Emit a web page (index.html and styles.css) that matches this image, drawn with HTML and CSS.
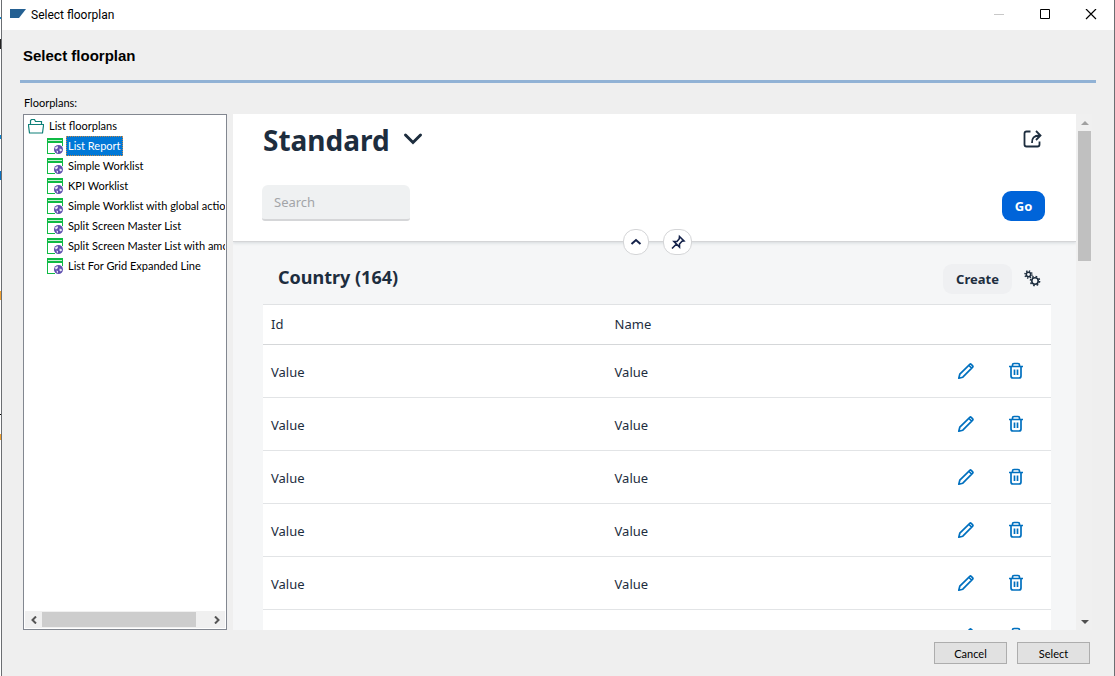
FILE: index.html
```
<!DOCTYPE html>
<html lang="en">
<head>
<meta charset="utf-8">
<title>Select floorplan</title>
<link rel="stylesheet" href="styles.css">
</head>
<body>
<svg class="sprite" aria-hidden="true">
  <symbol id="page" viewBox="0 0 16 16">
    <path fill="#fff" d="M0 0h16v16H0z"/>
    <path fill="#0fba45" d="M0 0h16v5H0z"/>
    <path fill="#0fba45" d="M0 4h1v12H0zM0 15h8v1H0zM15 4h1v4h-1z"/>
    <path fill="#c5efd2" d="M1 2h14v1H1z"/>
    <circle cx="11.500" cy="11.500" r="4.500" fill="#5f4fb0"/>
    <path fill="#e9e5f6" d="M8 9.500l2.500-1.500.5 1.500-1 1.500-1.500.5zM12.500 10.500l2 .5.5 1.500-1.500 1-1-1zM9.500 12.500l1.500.5v1.500l-1 .5z"/>
  </symbol>
  <symbol id="pencil" viewBox="0 0 18 18">
    <path d="M1.800 16.200l1-4L12.800 2.300q.7-.6 1.400 0l1.500 1.500q.6.700 0 1.400L5.800 15.200zM12 3.500l2.500 2.500" fill="none" stroke="currentColor" stroke-width="1.700" stroke-linejoin="round"/>
  </symbol>
  <symbol id="trash" viewBox="0 0 16 18">
    <path d="M1 4.500h14M4.500 4V3q0-1.500 1.500-1.500h4q1.500 0 1.500 1.500v1M3 4.500V14q0 2 2 2h6q2 0 2-2V4.500M6.500 7.500v5.500M9.500 7.500v5.500" fill="none" stroke="currentColor" stroke-width="1.700"/>
  </symbol>
</svg>
<main class="window">
  <header class="titlebar">
    <svg class="logo" width="16" height="9" viewBox="0 0 16 9" aria-hidden="true"><path fill="#246092" d="M0 0h16l-7 9H0z"/></svg>
    <span class="caption">Select floorplan</span>
    <button class="winbtn" type="button" aria-label="Minimize" disabled><svg width="12" height="12"><path d="M1 5.500h10" stroke="#c8c8c8"/></svg></button>
    <button class="winbtn" type="button" aria-label="Maximize"><svg width="12" height="12"><path d="M1.500 .5h9v9h-9z" fill="none" stroke="#000"/></svg></button>
    <button class="winbtn" type="button" aria-label="Close"><svg width="12" height="12"><path d="M1 0l10 10M11 0L1 10" stroke="#000" stroke-width="1.200"/></svg></button>
  </header>
  <div class="dialog">
    <h1 class="heading">Select floorplan</h1>
    <div class="body">
      <h2 class="label" id="tree-label">Floorplans:</h2>
      <div class="panes">
        <section class="treebox" aria-labelledby="tree-label">
          <div class="tree">
            <div class="root"><svg width="16" height="16" viewBox="0 0 16 16" aria-hidden="true"><path d="M2.500 6V2.500l1-1h3l1 2h6V6M.5 6.500h15v1l-1 7.500h-13L.5 7.500z" fill="#fff" stroke="#0f8078" stroke-width="1.200"/></svg><span class="name">List floorplans</span></div>
            <ul class="items">
              <li><svg><use href="#page"/></svg><span class="name selected">List Report</span></li>
              <li><svg><use href="#page"/></svg><span class="name">Simple Worklist</span></li>
              <li><svg><use href="#page"/></svg><span class="name">KPI Worklist</span></li>
              <li><svg><use href="#page"/></svg><span class="name">Simple Worklist with global action</span></li>
              <li><svg><use href="#page"/></svg><span class="name">Split Screen Master List</span></li>
              <li><svg><use href="#page"/></svg><span class="name">Split Screen Master List with amou</span></li>
              <li><svg><use href="#page"/></svg><span class="name">List For Grid Expanded Line</span></li>
            </ul>
          </div>
          <div class="hscroll">
            <button type="button" aria-label="Scroll left"><svg width="8" height="8"><path d="M6 .5L2.500 4 6 7.500" fill="none" stroke="#555" stroke-width="2"/></svg></button>
            <div class="htrack"><div class="hthumb"></div></div>
            <button type="button" aria-label="Scroll right"><svg width="8" height="8"><path d="M2 .5L5.500 4 2 7.500" fill="none" stroke="#555" stroke-width="2"/></svg></button>
          </div>
        </section>
        <section class="preview">
          <div class="page">
            <div class="pagehead">
              <div class="titlerow">
                <h2 class="variant">Standard</h2>
                <button class="plain" type="button" aria-label="Select view"><svg width="20" height="16"><path d="M2.500 3l7.500 7.500L17.500 3" fill="none" stroke="#1d2d3e" stroke-width="3" stroke-linecap="round"/></svg></button>
                <button class="plain share" type="button" aria-label="Share"><svg width="20" height="22"><path d="M8.500 2.500H4.500q-2 0-2 2v11q0 2 2 2h11q2 0 2-2V12.500M10 14q-.5-7.500 7.500-7.500M14 2l4.500 4.500L14 11" fill="none" stroke="#1d2d3e" stroke-width="1.800"/></svg></button>
              </div>
              <div class="filters">
                <input class="search" type="text" placeholder="Search" aria-label="Search">
                <button class="go" type="button">Go</button>
              </div>
              <div class="toggles">
                <button class="round" type="button" aria-label="Collapse header"><svg width="12" height="12"><path d="M1.500 8L6 4l4.500 4" fill="none" stroke="#14224a" stroke-width="2"/></svg></button>
                <button class="round pin" type="button" aria-label="Pin header"><svg width="16" height="16"><path d="M9.500 2.500l4.500 4.500-2 .3-2.500 2.700v3L4 7.500h3l2.300-2.700zM6.500 10L2 14.500" fill="none" stroke="#14224a" stroke-width="1.600"/></svg></button>
              </div>
            </div>
            <div class="content">
              <div class="toolbar">
                <h3 class="tabletitle">Country (164)</h3>
                <button class="create" type="button">Create</button>
                <button class="plain" type="button" aria-label="Settings"><svg width="18" height="20" fill="none" stroke="#1d2d3e"><circle cx="5.500" cy="5.500" r="2.200" stroke-width="1.500"/><circle cx="5.500" cy="5.500" r="3.500" stroke-width="1.600" stroke-dasharray="1.300 1.449"/><circle cx="12" cy="12" r="3.200" stroke-width="1.600"/><circle cx="12" cy="12" r="4.600" stroke-width="1.500" stroke-dasharray="1.700 1.913"/></svg></button>
              </div>
              <table class="grid">
                <colgroup><col class="c-id"><col><col class="c-edit"><col class="c-del"></colgroup>
                <thead><tr><th>Id</th><th>Name</th><th></th><th></th></tr></thead>
                <tbody>
                  <tr><td>Value</td><td>Value</td><td class="act"><button class="plain" type="button" aria-label="Edit"><svg class="ico"><use href="#pencil"/></svg></button></td><td class="act"><button class="plain" type="button" aria-label="Delete"><svg class="ico bin"><use href="#trash"/></svg></button></td></tr>
                  <tr><td>Value</td><td>Value</td><td class="act"><button class="plain" type="button" aria-label="Edit"><svg class="ico"><use href="#pencil"/></svg></button></td><td class="act"><button class="plain" type="button" aria-label="Delete"><svg class="ico bin"><use href="#trash"/></svg></button></td></tr>
                  <tr><td>Value</td><td>Value</td><td class="act"><button class="plain" type="button" aria-label="Edit"><svg class="ico"><use href="#pencil"/></svg></button></td><td class="act"><button class="plain" type="button" aria-label="Delete"><svg class="ico bin"><use href="#trash"/></svg></button></td></tr>
                  <tr><td>Value</td><td>Value</td><td class="act"><button class="plain" type="button" aria-label="Edit"><svg class="ico"><use href="#pencil"/></svg></button></td><td class="act"><button class="plain" type="button" aria-label="Delete"><svg class="ico bin"><use href="#trash"/></svg></button></td></tr>
                  <tr><td>Value</td><td>Value</td><td class="act"><button class="plain" type="button" aria-label="Edit"><svg class="ico"><use href="#pencil"/></svg></button></td><td class="act"><button class="plain" type="button" aria-label="Delete"><svg class="ico bin"><use href="#trash"/></svg></button></td></tr>
                  <tr><td></td><td></td><td class="act"><button class="plain" type="button" aria-label="Edit"><svg class="ico"><use href="#pencil"/></svg></button></td><td class="act"><button class="plain" type="button" aria-label="Delete"><svg class="ico bin"><use href="#trash"/></svg></button></td></tr>
                </tbody>
              </table>
            </div>
          </div>
          <div class="vscroll">
            <button type="button" aria-label="Scroll up"><svg width="8" height="4"><path d="M0 4l4-4 4 4z" fill="#a0a0a0"/></svg></button>
            <div class="vtrack"><div class="vthumb"></div></div>
            <button type="button" aria-label="Scroll down"><svg width="8" height="4"><path d="M0 0l4 4 4-4z" fill="#505050"/></svg></button>
          </div>
        </section>
      </div>
    </div>
    <footer class="footer">
      <button class="push" type="button">Cancel</button>
      <button class="push" type="button">Select</button>
    </footer>
  </div>
</main>
</body>
</html>
```
FILE: styles.css
```
* { box-sizing: border-box; }
body {
  margin: 0;
  height: 100vh;
  display: flex;
  padding-left: 1px;
  overflow: hidden;
  font-family: Lato, "Liberation Sans", Arial, sans-serif;
  font-size: 11px;
  color: #000;
  background:
    linear-gradient(#0a84d0, #0a84d0) 0 17px / 1px 2px no-repeat,
    linear-gradient(#222, #222) 0 39px / 1px 10px no-repeat,
    linear-gradient(#0a84d0, #0a84d0) 0 135px / 1px 4px no-repeat,
    linear-gradient(#0a70c0, #0a70c0) 0 171px / 1px 9px no-repeat,
    linear-gradient(#f0a030, #f0a030) 0 291px / 1px 9px no-repeat,
    linear-gradient(#000, #000) 0 414px / 1px 1px no-repeat,
    linear-gradient(#f0a030, #f0a030) 0 434px / 1px 6px no-repeat,
    #fff;
}
button, input { font: inherit; color: inherit; margin: 0; }
button { border: 0; padding: 0; background: none; }
svg { display: block; flex: none; }
h1, h2, h3, ul { margin: 0; padding: 0; }
.sprite { position: absolute; width: 0; height: 0; }
.window {
  flex: 1;
  display: flex;
  flex-direction: column;
  min-width: 0;
  border: solid #6b6e72;
  border-width: 0 1px;
  background: #efefef;
}
.titlebar { display: flex; height: 30px; align-items: center; background: #fff; padding-left: 8px; }
.logo { margin-bottom: 3px; }
.caption { flex: 1; margin-left: 5px; font-family: Roboto, sans-serif; font-size: 12px; line-height: 20px; }
.winbtn { width: 46px; height: 28px; display: flex; align-items: center; justify-content: center; }
.dialog { flex: 1; min-height: 0; display: flex; flex-direction: column; padding: 0 18px; }
.heading { height: 53px; padding-left: 3px; font-family: "Liberation Sans", Arial, sans-serif; font-size: 15px; line-height: 52px; border-bottom: 3px solid #91b2d5; }
.body { flex: 1; min-height: 0; display: flex; flex-direction: column; padding: 12px 4px 0 3px; }
.label { font-size: 11px; font-weight: 400; line-height: 16px; padding-left: 1px; margin-bottom: 3px; }
.panes { flex: 1; min-height: 0; display: flex; gap: 6px; }
.treebox { width: 204px; flex: none; display: flex; flex-direction: column; border: 1px solid #828790; background: #fff; padding: 1px; }
.tree { flex: 1; min-height: 0; overflow: hidden; }
.root, .items li { display: flex; align-items: center; height: 20px; white-space: nowrap; }
.root { padding-left: 3px; }
.items { list-style: none; }
.items li { padding-left: 22px; }
.items svg { width: 16px; height: 16px; }
.name { line-height: 18px; padding: 0 1px; margin-left: 3px; border: 1px solid transparent; }
.name.selected { background: #0078d7; color: #fff; border: 1px dotted #c58a4a; }
.hscroll { display: flex; height: 17px; background: #f0f0f0; }
.hscroll button { width: 17px; display: grid; place-items: center; }
.htrack { flex: 1; padding: 1px 0; }
.hthumb { width: 93%; height: 100%; background: #cdcdcd; }
.preview { flex: 1; min-width: 0; display: flex; }
.page {
  flex: 1;
  min-width: 0;
  overflow: hidden;
  background: #f5f6f7;
  color: #1d2d3e;
  font-family: "Noto Sans", sans-serif;
  font-size: 13px;
}
.pagehead { position: relative; height: 128px; padding: 8px 31px 0 29px; background: #fff; border-bottom: 1px solid #d4d5d7; box-shadow: 0 1px 3px rgba(34, 53, 72, .15); }
.titlerow { display: flex; align-items: center; height: 36px; }
.plain { display: grid; place-items: center; }
.variant { font-size: 28px; line-height: 36px; margin-right: 13px; padding-left: 1px; }
.share { margin: 0 3px 0 auto; }
.filters { display: flex; justify-content: space-between; align-items: flex-end; margin-top: 27px; }
.search { width: 148px; height: 36px; padding: 0 12px; border: 0; border-bottom: 2px solid #d5d6d8; border-radius: 6px 6px 3px 3px; background: #eff1f2; }
.search::placeholder { color: #a3a5a8; opacity: 1; }
.go { width: 43px; height: 30px; border-radius: 9px; background: #0064d9; color: #fff; font-weight: 700; }
.toggles { position: absolute; left: 0; right: 0; bottom: -14px; display: flex; justify-content: center; align-items: center; gap: 14px; padding-left: 6px; }
.round { width: 26px; height: 26px; display: grid; place-items: center; border: 1px solid #d4d5d7; border-radius: 12px; background: #fff; }
.pin { width: 29px; }
.content { padding: 20px 25px 0 30px; }
.toolbar { display: flex; align-items: center; height: 42px; padding: 0 10px 8px 15px; }
.tabletitle { flex: 1; font-size: 18px; line-height: 24px; padding-bottom: 4px; }
.create { width: 69px; height: 30px; margin-right: 11px; border-radius: 9px; background: #eff0f2; font-weight: 700; }
.grid { width: 100%; table-layout: fixed; border-collapse: collapse; background: #fff; border-top: 1px solid #e0e2e4; }
.c-id { width: 43.6%; }
.c-edit { width: 50px; }
.c-del { width: 60px; }
th { height: 40px; font-weight: 400; text-align: left; border-bottom: 1px solid #d5d7d9; }
td { height: 53px; border-bottom: 1px solid #e2e4e6; }
th { padding: 0 8px 2px; }
td { padding: 2px 8px 0; }
.act { padding: 0; color: #0070bf; }
.act .plain { width: 50px; height: 30px; }
.ico { width: 18px; height: 18px; }
.bin { width: 16px; }
.vscroll { width: 16px; display: flex; flex-direction: column; padding-left: 2px; background: #f0f0f0; }
.vscroll button { height: 17px; width: 13px; display: grid; place-items: center; }
.vtrack { flex: 1; }
.vthumb { height: 27%; width: 13px; background: #c0c0c0; }
.footer { display: flex; justify-content: flex-end; gap: 10px; padding: 12px 6px 12px 0; }
.push { width: 73px; height: 22px; background: #e1e1e1; border: 1px solid #adadad; }
```
